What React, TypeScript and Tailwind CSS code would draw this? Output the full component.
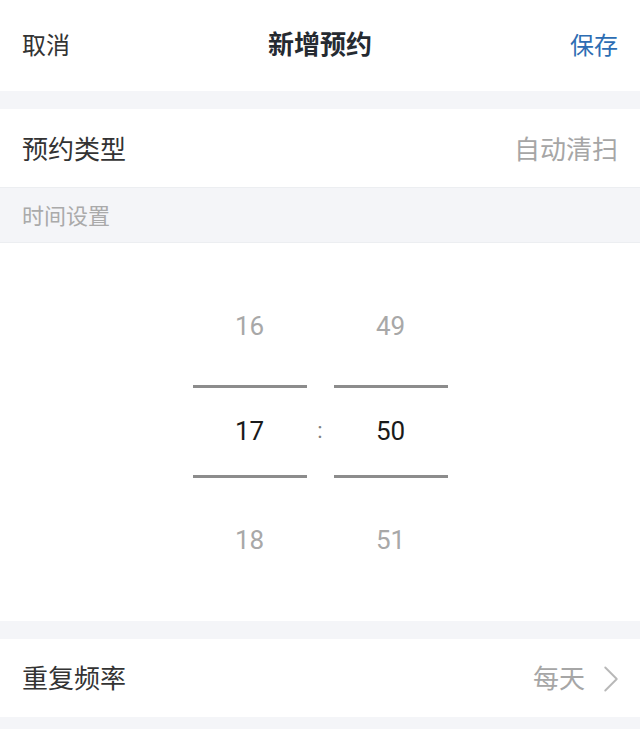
import { ChevronRight } from "lucide-react";

const CJK = "font-['Roboto','Noto_Sans_CJK_SC',sans-serif]";

function Column({ values }: { values: [string, string, string] }) {
  return (
    <div className="flex w-[114px] flex-col">
      <div className="flex h-[90px] items-center justify-center text-[26px] text-[#a8a8a8]">{values[0]}</div>
      <div className="mt-[14px] h-[3px] bg-[#8c8c8c]" />
      <div className="flex h-[87px] items-center justify-center text-[26px] text-[#1a1a1a]">{values[1]}</div>
      <div className="h-[3px] bg-[#8c8c8c]" />
      <div className="mt-[17px] flex h-[90px] items-center justify-center text-[26px] text-[#a8a8a8]">{values[2]}</div>
    </div>
  );
}

export default function App() {
  return (
    <div className={`h-[729px] w-[640px] overflow-hidden bg-[#f4f5f8] ${CJK}`}>
      {/* nav bar */}
      <div className="flex h-[91px] items-center justify-between bg-white px-[22px]">
        <span className="w-[96px] text-[24px] text-[#333]">取消</span>
        <span className="text-[26px] font-bold text-[#252a31]">新增预约</span>
        <span className="w-[96px] text-right text-[24px] text-[#2d6db3]">保存</span>
      </div>

      <div className="mt-[18px] flex h-[79px] items-center justify-between border-b border-[#eceef1] bg-white px-[22px] pt-[4px]">
        <span className="text-[26px] text-[#333]">预约类型</span>
        <span className="text-[26px] text-[#a6a6a6]">自动清扫</span>
      </div>

      <div className="flex h-[55px] items-center border-b border-[#eceef1] px-[22px] pt-[2px] text-[22px] text-[#aaa]">
        时间设置
      </div>

      {/* time picker */}
      <div className="flex h-[378px] justify-center bg-white pt-[38px]">
        <Column values={["16", "17", "18"]} />
        <div className="flex w-[27px] justify-center pt-[139px] text-[22px] leading-none text-[#808080]">:</div>
        <Column values={["49", "50", "51"]} />
      </div>

      <div className="mt-[18px] flex h-[78px] items-center justify-between bg-white pl-[22px] pr-[6px] pt-[2px]">
        <span className="text-[26px] text-[#333]">重复频率</span>
        <div className="flex items-center gap-[3px]">
          <span className="text-[26px] text-[#a6a6a6]">每天</span>
          <ChevronRight size={46} strokeWidth={1} className="text-[#b8b8b8]" />
        </div>
      </div>
    </div>
  );
}
